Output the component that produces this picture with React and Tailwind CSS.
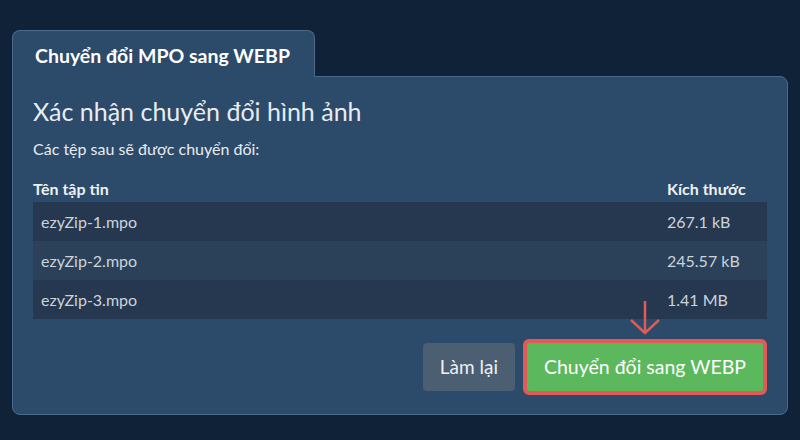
import React from 'react';

const files = [
  { name: 'ezyZip-1.mpo', size: '267.1 kB' },
  { name: 'ezyZip-2.mpo', size: '245.57 kB' },
  { name: 'ezyZip-3.mpo', size: '1.41 MB' },
];

export default function App() {
  return (
    <div className="min-h-screen w-full bg-[#0f2237] px-3 pt-[30px] font-['Lato','Liberation_Sans',sans-serif]">
      {/* Tab */}
      <div className="relative z-10 -mb-px inline-block rounded-t-lg border border-b-0 border-[#4e6a8a] bg-[#2c4a6a] pb-[9px] pl-[22px] pr-6 pt-[13px]">
        <div className="text-[19.5px] font-bold leading-6 text-white">Chuyển đổi MPO sang WEBP</div>
      </div>

      {/* Panel */}
      <div className="w-[776px] rounded-b-lg rounded-tr-lg border border-[#4e6a8a] bg-[#2c4a6a] px-5 pb-[19px] pt-[18px]">
        <h2 className="text-[25px] leading-8 text-[#e8ecf0]">Xác nhận chuyển đổi hình ảnh</h2>
        <p className="mt-3 text-[16px] leading-5 text-[#e8ecf0]">Các tệp sau sẽ được chuyển đổi:</p>

        <div className="mt-5">
          <div className="flex pb-[3px] text-[16px] font-bold leading-5 text-[#eef1f4]">
            <div className="flex-1">Tên tập tin</div>
            <div className="w-[100px]">Kích thước</div>
          </div>
          {files.map((f, i) => (
            <div
              key={f.name}
              className={`flex h-[39px] items-center text-[16px] text-[#ccd3dc] ${i % 2 === 0 ? 'bg-[#253850]' : 'bg-[#2b4159]'}`}
            >
              <div className="flex-1 pl-2">{f.name}</div>
              <div className="w-[100px]">{f.size}</div>
            </div>
          ))}
        </div>

        <div className="mt-5 flex items-center justify-end gap-2">
          <button className="h-12 rounded bg-[#4b5e72] px-[17px] text-[19px] text-[#eef1f4]">Làm lại</button>
          <div className="relative">
            <svg className="absolute -top-[39px] left-[107px]" width="30" height="36" viewBox="0 0 30 36" fill="none">
              <path d="M15 1 V33 M1 20 L15 33 L29 20" stroke="#e05a58" strokeWidth="2.5" />
            </svg>
            <button className="h-14 rounded-md border-4 border-[#e05a58] bg-[#5cb85c] px-[17px] text-[19.5px] text-white">
              Chuyển đổi sang WEBP
            </button>
          </div>
        </div>
      </div>
    </div>
  );
}
